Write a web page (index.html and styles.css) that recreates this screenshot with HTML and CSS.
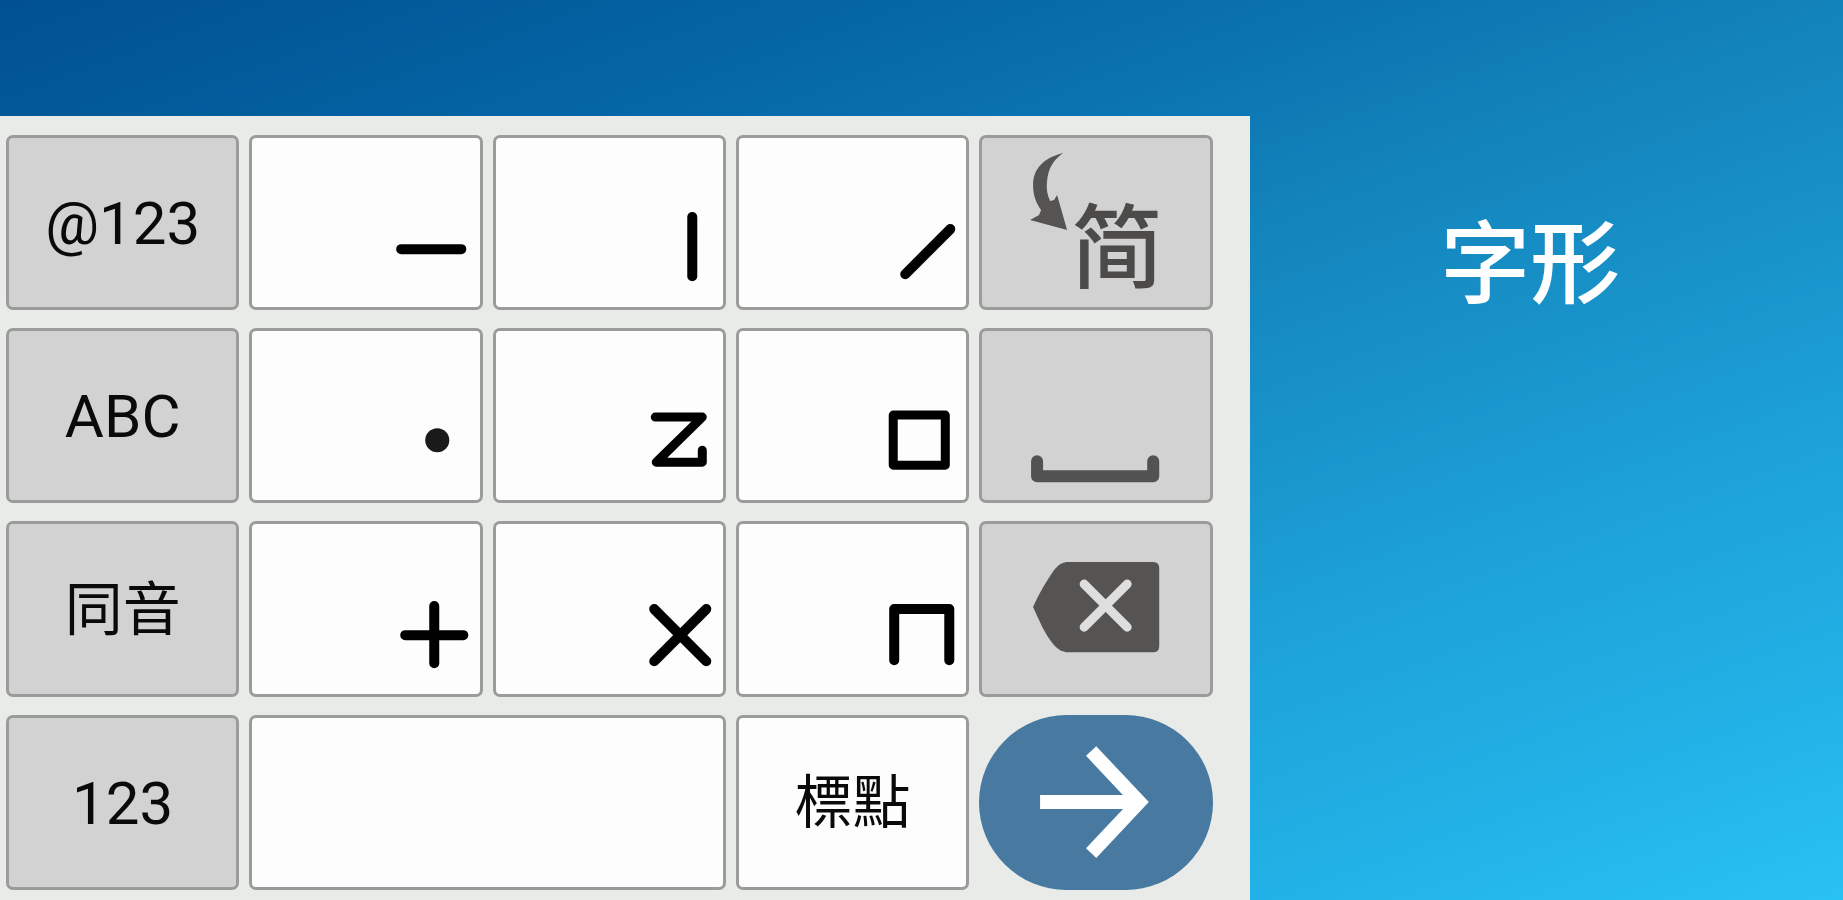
FILE: index.html
```html
<!DOCTYPE html>
<html lang="zh-Hant">
<head>
<meta charset="utf-8">
<meta name="viewport" content="width=device-width, initial-scale=1">
<title>字形</title>
<link rel="stylesheet" href="styles.css">
</head>
<body>
<main class="stage">
  <section class="keyboard" aria-label="鍵盤">
    <button class="key key-mod key-latin" type="button">@123</button>
    <button class="key" type="button" aria-label="橫">
      <svg class="glyph" viewBox="3 3 227 169" preserveAspectRatio="xMaxYMid"><path d="M152 114H212"/></svg>
    </button>
    <button class="key" type="button" aria-label="豎">
      <svg class="glyph" viewBox="3 3 227 169" preserveAspectRatio="xMaxYMid"><path d="M199 82V141"/></svg>
    </button>
    <button class="key" type="button" aria-label="撇">
      <svg class="glyph" viewBox="3 3 227 169" preserveAspectRatio="xMaxYMid"><path d="M169 139L214 94"/></svg>
    </button>
    <button class="key key-mod" type="button">
      <svg class="symbol" viewBox="3 3 227 169">
        <path class="fill" d="M84 18C64 23 54 34 54 50C54 60 57 68 62 75L60 80L51 85L88 95L78 60L75 65L71 66C68 60 67 53 68 46C69 34 74 25 84 18Z"/>
        <text class="simplified" x="138" y="146" text-anchor="middle">简</text>
      </svg>
    </button>

    <button class="key key-mod key-latin" type="button">ABC</button>
    <button class="key" type="button" aria-label="點">
      <svg class="glyph" viewBox="3 3 227 169" preserveAspectRatio="xMaxYMid"><circle class="dot" cx="188" cy="112" r="12"/></svg>
    </button>
    <button class="key" type="button" aria-label="折">
      <svg class="glyph" viewBox="3 3 227 169" preserveAspectRatio="xMaxYMid"><path class="thin" d="M162 89H209L163 134H209V122"/></svg>
    </button>
    <button class="key" type="button" aria-label="方">
      <svg class="glyph" viewBox="3 3 227 169" preserveAspectRatio="xMaxYMid"><path class="thin" d="M157 87H209V137H157Z"/></svg>
    </button>
    <button class="key key-mod" type="button" aria-label="空格">
      <svg class="symbol" viewBox="3 3 227 169"><path class="line" d="M58 133V148H174V133"/></svg>
    </button>

    <button class="key key-mod key-han" type="button">同音</button>
    <button class="key" type="button" aria-label="十">
      <svg class="glyph" viewBox="3 3 227 169" preserveAspectRatio="xMaxYMid"><path d="M156 114H214M185 85V142"/></svg>
    </button>
    <button class="key" type="button" aria-label="叉">
      <svg class="glyph" viewBox="3 3 227 169" preserveAspectRatio="xMaxYMid"><path d="M161 88L213 140M213 88L161 140"/></svg>
    </button>
    <button class="key" type="button" aria-label="框">
      <svg class="glyph" viewBox="3 3 227 169" preserveAspectRatio="xMaxYMid"><path d="M158 139V88H213V139"/></svg>
    </button>
    <button class="key key-mod" type="button" aria-label="刪除">
      <svg class="symbol" viewBox="3 3 227 169">
        <path class="fill" d="M54 86C60 73 66 62 75 49C80 43 84 41 89 41H174Q180 41 180 47V125Q180 131 174 131H89C84 131 80 129 75 124C66 114 60 99 54 86Z"/>
        <path class="cross" d="M105 63L148 106M148 63L105 106"/>
      </svg>
    </button>

    <button class="key key-mod key-latin" type="button">123</button>
    <button class="key key-wide" type="button" aria-label="空白鍵"></button>
    <button class="key key-han" type="button">標點</button>
    <button class="key key-enter" type="button" aria-label="確定">
      <svg class="symbol" viewBox="0 0 233 175"><path class="arrow" d="M61 87H158M112 36L160 87L112 138"/></svg>
    </button>
  </section>
  <aside class="caption"><h1 class="title">字形</h1></aside>
</main>
</body>
</html>
```
FILE: styles.css
```css
* {
  box-sizing: border-box;
}

body {
  margin: 0;
  font-family: Roboto, "Noto Sans CJK TC", sans-serif;
}

.stage {
  display: grid;
  grid-template-columns: 67.8% 1fr;
  min-height: 100vh;
  padding-top: 116px;
  background: linear-gradient(160deg, #005092 0%, #0565a4 20%, #0b75b1 33%, #1383bb 43%, #1da3d9 71%, #22b1e6 86%, #29c2f4 100%);
}

.keyboard {
  display: grid;
  grid-template-columns: repeat(5, minmax(0, 1fr));
  grid-template-rows: repeat(4, minmax(120px, 1fr));
  gap: 18px 10px;
  padding: 19px 37px 13px 6px;
  background: #e8ebe7;
}

.key {
  display: flex;
  align-items: center;
  justify-content: center;
  min-width: 0;
  min-height: 0;
  padding: 0;
  border: 3px solid #9a9c99;
  border-radius: 7px;
  background: #fdfdfd;
  color: #0a0a0a;
  font-family: inherit;
  font-size: 60px;
  font-weight: 400;
}

.key-mod {
  background: #d2d2d2;
}

.key-latin {
  padding-top: 2px;
}

.key-han {
  padding-bottom: 8px;
  font-size: 58px;
}

.key-wide {
  grid-column: span 2;
}

.key-enter {
  border: 0;
  border-radius: 88px;
  background: #4879a0;
}

.glyph,
.symbol {
  display: block;
  width: 100%;
  height: 100%;
}

.glyph {
  fill: none;
  stroke: #000;
  stroke-width: 10;
  stroke-linecap: round;
  stroke-linejoin: round;
}

.glyph .thin {
  stroke-width: 9;
}

.glyph .dot {
  fill: #1a1a1a;
  stroke: none;
}

.symbol .fill {
  fill: #565452;
}

.symbol .line,
.symbol .cross,
.symbol .arrow {
  fill: none;
  stroke: #525252;
  stroke-width: 12;
  stroke-linecap: round;
  stroke-linejoin: round;
}

.symbol .cross {
  stroke: #dedede;
  stroke-width: 9;
}

.symbol .arrow {
  stroke: #fff;
  stroke-width: 14;
  stroke-linecap: butt;
  stroke-linejoin: miter;
}

.simplified {
  fill: #4c4b4a;
  font-family: "Noto Sans CJK SC", sans-serif;
  font-size: 92px;
  font-weight: 500;
}

.caption {
  padding: 76px 32px 0 0;
  text-align: center;
}

.title {
  margin: 0;
  color: #fff;
  font-family: "Noto Sans CJK TC", sans-serif;
  font-size: 90px;
  font-weight: 500;
  line-height: 130px;
}
```
